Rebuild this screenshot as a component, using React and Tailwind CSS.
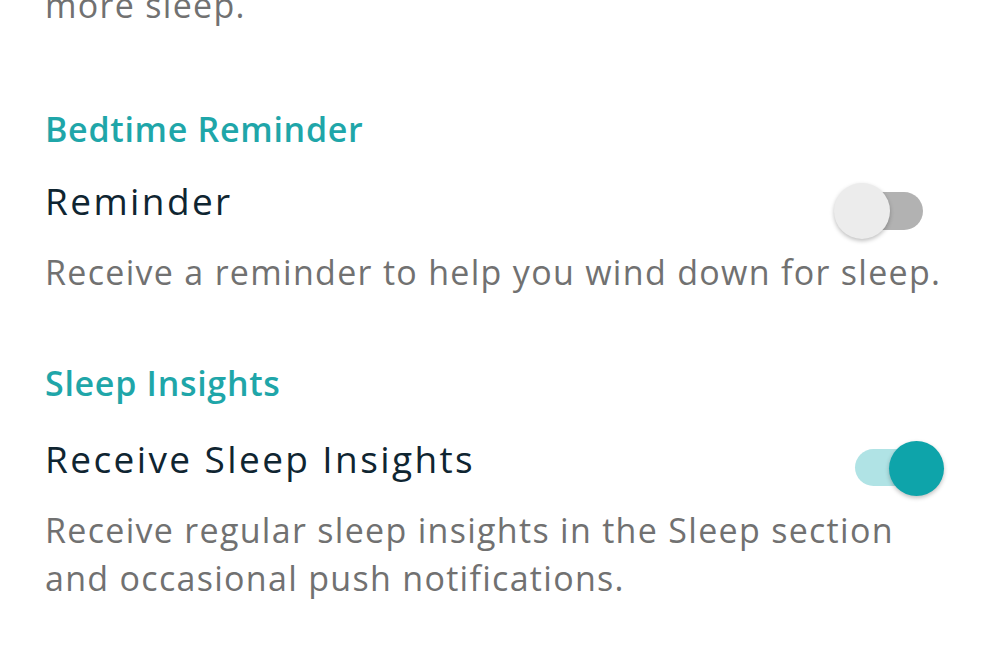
import { useState } from "react";

function Toggle({ on, onChange }) {
  return (
    <button
      onClick={() => onChange(!on)}
      className="relative w-[110px] h-[56px] shrink-0 mt-[6px]"
    >
      {on ? (
        <>
          <span className="absolute left-[21px] top-[8px] w-[75px] h-[37px] rounded-full bg-[#b0e3e5]" />
          <span className="absolute right-0 top-0 w-[55px] h-[55px] rounded-full bg-[#0ea4aa] shadow-[0_2px_4px_rgba(0,0,0,0.25)]" />
        </>
      ) : (
        <>
          <span className="absolute left-[14px] top-[9px] w-[75px] h-[38px] rounded-full bg-[#b2b2b2]" />
          <span className="absolute left-0 top-0 w-[56px] h-[56px] rounded-full bg-[#ececec] shadow-[0_2px_4px_rgba(0,0,0,0.25)]" />
        </>
      )}
    </button>
  );
}

function Setting({ title, desc, on, onChange }) {
  return (
    <div>
      <div className="flex justify-between items-start">
        <div className="text-[37px] leading-[48px] tracking-[2.4px] text-[#0f2531]">{title}</div>
        <Toggle on={on} onChange={onChange} />
      </div>
      <p className="mt-[9px] text-[34px] leading-[48px] tracking-[1.3px] text-[#717171]">{desc}</p>
    </div>
  );
}

export default function App() {
  const [reminder, setReminder] = useState(false);
  const [insights, setInsights] = useState(true);

  return (
    <div className="w-[999px] h-[666px] overflow-hidden bg-white pl-[45px] pr-[55px] font-['Open_Sans',sans-serif]">
      <p className="-mt-[19px] text-[34px] leading-[48px] tracking-[1.3px] text-[#717171]">more sleep.</p>

      <h2 className="mt-[80px] text-[34px] leading-[40px] font-semibold tracking-[0.7px] text-[#1fa6a9]">
        Bedtime Reminder
      </h2>
      <div className="mt-[28px]">
        <Setting
          title="Reminder"
          desc="Receive a reminder to help you wind down for sleep."
          on={reminder}
          onChange={setReminder}
        />
      </div>

      <h2 className="mt-[67px] text-[34px] leading-[40px] font-semibold tracking-[0.7px] text-[#1fa6a9]">
        Sleep Insights
      </h2>
      <div className="mt-[32px]">
        <Setting
          title="Receive Sleep Insights"
          desc="Receive regular sleep insights in the Sleep section and occasional push notifications."
          on={insights}
          onChange={setInsights}
        />
      </div>
    </div>
  );
}
